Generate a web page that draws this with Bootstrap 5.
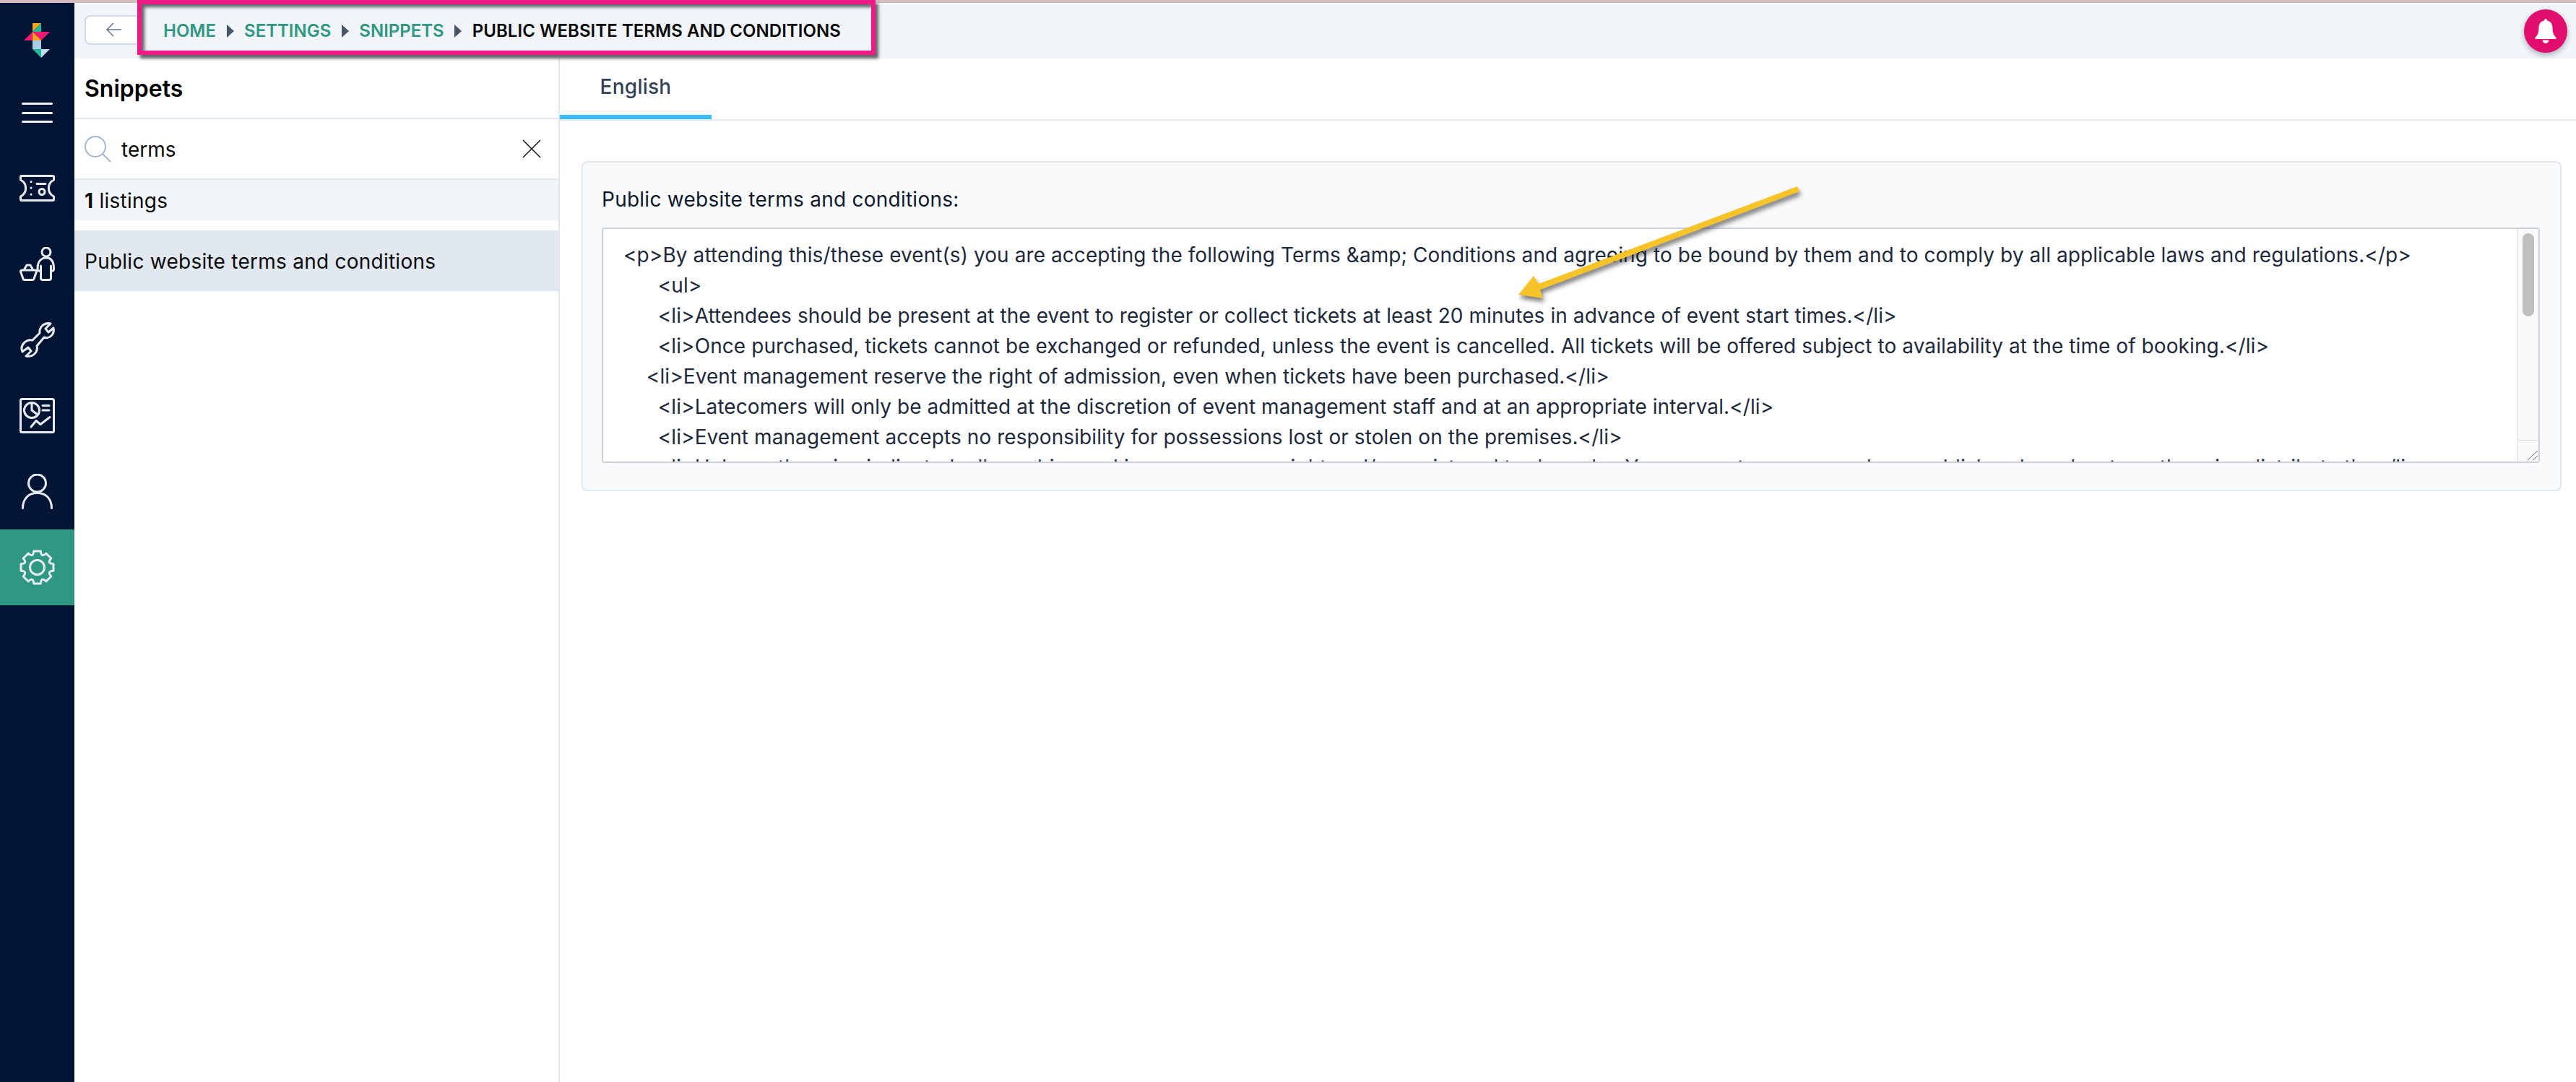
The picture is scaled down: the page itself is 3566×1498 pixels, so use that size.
<!DOCTYPE html>
<html lang="en">

<head>
    <meta charset="UTF-8">
    <title>Snippets</title>
    <link href="https://cdn.jsdelivr.net/npm/bootstrap@5.3.3/dist/css/bootstrap.min.css" rel="stylesheet">
    <style>
        body { font-family: Inter, "Liberation Sans", sans-serif; font-size: 28px; letter-spacing: .25px; color: #0a0a0a; background: #fff; overflow: hidden; }
        .shrinkable { min-width: 0; min-height: 0; }
        .top-line { height: 4px; background: #d4bcc1; flex: none; }
        .side { width: 103px; background: #021433; flex: none; }
        .logo { height: 78px; margin-top: 28px; }
        .burger { height: 98px; padding-top: 32px; }
        .burger span { display: block; width: 43px; height: 3px; background: #eef2f7; margin: 0 auto 9.5px; border-radius: 2px; }
        .side-link { height: 105px; color: #e6ebf2; }
        .side-link.active { background: #2f9883; }
        .side-link svg { fill: none; stroke: currentColor; stroke-width: 3; stroke-linecap: round; stroke-linejoin: round; }

        .top-bar { height: 77px; background: #f1f4f9; padding-left: 14px; padding-right: 12px; flex: none; }
        .back-btn { width: 79px; height: 41px; margin-bottom: 3px; background: #fff; border: 2px solid #cfdbe8; border-radius: 8px; padding: 0 0 0 28px; }
        .crumbs { margin: 0 0 0 30px; font-size: 24px; font-weight: 600; letter-spacing: 0; }
        .crumbs a { color: #2f9883; text-decoration: none; }
        .crumbs .breadcrumb-item { padding: 0; display: flex; align-items: center; }
        .crumbs .breadcrumb-item + .breadcrumb-item::before { content: ""; float: none; padding: 0; width: 0; height: 0; margin: 0 14.5px; border-left: 10px solid #475569; border-top: 9px solid transparent; border-bottom: 9px solid transparent; }
        .crumbs .breadcrumb-item.active { color: #0a0a0a; letter-spacing: .05px; }
        .bell { width: 60px; height: 60px; background: #e20e6e; box-shadow: 0 3px 7px rgba(30, 40, 60, .35); }

        .list-col { width: 672px; flex: none; border-right: 2px solid #e2e8f0; }
        .list-title { height: 84px; padding: 2px 0 0 14px; border-bottom: 2px solid #e2e8f0; font-size: 32px; font-weight: 600; letter-spacing: 0; color: #000; }
        .search-row { height: 84px; padding: 0 24px 0 14px; border-bottom: 2px solid #e2e8f0; }
        .search-row input { border: 0; padding: 2px 0 0 0; margin-left: 14px; font-size: 28px; color: #0a0a0a; background: transparent; box-shadow: none; }
        .listing-count { height: 56px; padding: 1px 0 0 14px; background: #f1f4f9; }
        .list-group-item.snippet { height: 84px; margin-top: 14px; padding: 1px 0 0 14px; background: #e2e8f0; border: 0; border-radius: 0; color: #0a0a0a; }

        .tabs { height: 86px; border-bottom: 2px solid #e2e8f0; flex: none; }
        .tabs .nav-link { height: 84px; width: 210px; padding: 0; border: 0; border-bottom: 6px solid #38bdf8; border-radius: 0; background: transparent; color: #334155; font-weight: 500; margin: 0; }
        .panel { margin: 56px 20px 0 30px; background: #f8fafc; border: 2px solid #e2e8f0; border-radius: 8px; padding: 30px 28px 37px 26px; }
        .panel label { line-height: 42px; margin-bottom: 18px; color: #0f172a; display: block; }
        .panel textarea { height: 326px; padding: 15px 40px 0 28px; line-height: 42px; font-size: 28px; letter-spacing: .08px; color: #1e293b; border: 2px solid #cbd0dc; border-radius: 4px; box-shadow: none; resize: none; }

        /* barra de scroll dibujada sobre el textarea */
        .fake-scroll { position: absolute; top: 2px; right: 2px; bottom: 2px; width: 30px; background: #fafafa; border-left: 2px solid #e8e8e8; }
        .fake-scroll .thumb { position: absolute; left: 6px; top: 6px; width: 16px; height: 115px; background: #bfbfbf; border-radius: 8px; }
        .fake-scroll .corner { position: absolute; left: 0; right: 0; bottom: 0; height: 30px; border-top: 1px solid #dcdcdc; }

        .callout { position: absolute; left: 190px; top: 0; width: 1022px; height: 76px; border: 6px solid #ef1a85; box-shadow: 4px 5px 4px rgba(40, 40, 40, .7), inset 4px 4px 4px rgba(40, 40, 40, .7); pointer-events: none; }
        .arrow { position: absolute; left: 2090px; top: 250px; filter: drop-shadow(2px 5px 3px rgba(30, 30, 30, .6)); }
    </style>
</head>

<body class="d-flex flex-column vh-100">

    <div class="top-line"></div>

    <div class="d-flex flex-grow-1 shrinkable">
        <!-- menu lateral -->
        <nav class="side d-flex flex-column">
            <div class="logo d-flex justify-content-center">
                <svg width="37" height="48" viewBox="0 0 37 48">
                    <polygon points="12,0 24,0 12,12" fill="#f9a51a" />
                    <polygon points="24,0 24,12 12,12" fill="#1fb89a" />
                    <polygon points="0,24 12,12 36,12 24,24" fill="#ee1a73" />
                    <polygon points="12,12 24,24 12,24" fill="#f9a51a" />
                    <rect x="12" y="24" width="12" height="12" fill="#a8cce4" />
                    <polygon points="12,36 24,36 24,48" fill="#1fb89a" />
                    <polygon points="24,36 36,36 24,48" fill="#c3dbea" />
                </svg>
            </div>
            <div class="burger"><span></span><span></span><span></span></div>

            <a class="side-link d-flex align-items-center justify-content-center" href="#">
                <svg width="49" height="37" viewBox="0 0 49 37">
                    <path d="M3 1.5H46Q47.5 1.5 47.5 3V7C38 12 38 25 47.5 30V34Q47.5 35.5 46 35.5H3Q1.5 35.5 1.5 34V30C11 25 11 12 1.5 7V3Q1.5 1.5 3 1.5Z" />
                    <path d="M16 9.5v.2M16 18v.2M16 27v.2M24 12.5H36" />
                    <circle cx="31" cy="23.5" r="4" />
                </svg>
            </a>
            <a class="side-link d-flex align-items-center justify-content-center" href="#">
                <svg width="49" height="47" viewBox="0 0 49 47">
                    <circle cx="37" cy="7" r="6" />
                    <path d="M29.5 33H27Q25 33 25 30C25 20 30 15 37 15C44 15 47.5 20 47.5 30Q47.5 33 45.5 33H43.5M29.5 26V43Q29.5 45.5 32 45.5H41Q43.5 45.5 43.5 43V26" />
                    <path d="M1.5 34Q1.5 32 3.5 32H21.5Q23.5 32 23.5 34L20 44Q19.5 45.5 18 45.5H7Q5.5 45.5 5 44ZM6 32L10 25H15L19 32" />
                </svg>
            </a>
            <a class="side-link d-flex align-items-center justify-content-center" href="#">
                <svg width="49" height="49" viewBox="0 0 49 49">
                    <path d="M18 25L28 15C27 7 34 0 43 2L36 9L40 14L47 8C49 17 41 24 34 21L24 33C26 41 19 49 9 47L16 40L12 35L4 41C0 32 9 23 18 25Z" />
                </svg>
            </a>
            <a class="side-link d-flex align-items-center justify-content-center" href="#">
                <svg width="49" height="49" viewBox="0 0 49 49">
                    <rect x="1.5" y="1.5" width="46" height="46" rx="2" />
                    <circle cx="17" cy="17" r="10.5" />
                    <path d="M17 6.5V17L25 23M32 10.5H41M32 17H41M16 40L23 31.5L29 36.5L42 26.5" />
                </svg>
            </a>
            <a class="side-link d-flex align-items-center justify-content-center" href="#">
                <svg width="43" height="49" viewBox="0 0 43 49">
                    <circle cx="21.5" cy="13" r="12" />
                    <path d="M1.5 47.5C1.5 34 10 26.5 21.5 26.5C33 26.5 41.5 34 41.5 47.5" />
                </svg>
            </a>
            <a class="side-link active d-flex align-items-center justify-content-center" href="#">
                <svg width="49" height="49" viewBox="0 0 49 49">
                    <path d="M47 19.7V29.3Q37.4 29.9 43.8 37L37 43.8Q29.9 37.4 29.3 47H19.7Q19.1 37.4 12 43.8L5.2 37Q11.6 29.9 2 29.3V19.7Q11.6 19.1 5.2 12L12 5.2Q19.1 11.6 19.7 2H29.3Q29.9 11.6 37 5.2L43.8 12Q37.4 19.1 47 19.7Z" />
                    <circle cx="24.5" cy="24.5" r="10" />
                </svg>
            </a>
        </nav>

        <div class="d-flex flex-column flex-grow-1 shrinkable">
            <!-- barra superior -->
            <header class="top-bar d-flex align-items-center">
                <button class="back-btn d-flex align-items-center" type="button">
                    <svg width="22" height="20" viewBox="0 0 22 20" fill="none" stroke="#64748b" stroke-width="1.5">
                        <path d="M21 10H1M10 1L1 10L10 19" />
                    </svg>
                </button>
                <ol class="breadcrumb crumbs">
                    <li class="breadcrumb-item"><a href="#">HOME</a></li>
                    <li class="breadcrumb-item"><a href="#">SETTINGS</a></li>
                    <li class="breadcrumb-item"><a href="#">SNIPPETS</a></li>
                    <li class="breadcrumb-item active">PUBLIC WEBSITE TERMS AND CONDITIONS</li>
                </ol>
                <div class="bell rounded-circle d-flex align-items-center justify-content-center ms-auto">
                    <svg width="30" height="34" viewBox="0 0 30 34" fill="#fff">
                        <path d="M15 0C16.4 0 17 1 17 2.6C22 3.6 24.5 7.5 24.5 12.5C24.5 18 25.5 22 29.5 26C30 27 29.5 28 28.5 28H1.5C.5 28 0 27 .5 26C4.5 22 5.5 18 5.5 12.5C5.5 7.5 8 3.6 13 2.6C13 1 13.6 0 15 0ZM10.5 29.5H19.5C19 32 17.5 34 15 34C12.5 34 11 32 10.5 29.5Z" />
                    </svg>
                </div>
            </header>

            <div class="d-flex flex-grow-1 shrinkable">
                <!-- listado -->
                <aside class="list-col">
                    <div class="list-title d-flex align-items-center">Snippets</div>
                    <div class="search-row d-flex align-items-center">
                        <svg width="37" height="37" viewBox="0 0 37 37" fill="none" stroke="#a3b5cb" stroke-width="2" class="flex-shrink-0">
                            <circle cx="15" cy="15" r="14" />
                            <path d="M25 25L36 36" />
                        </svg>
                        <input class="form-control" type="text" value="terms">
                        <svg width="26" height="26" viewBox="0 0 26 26" fill="none" stroke="#111" stroke-width="1.5" class="flex-shrink-0">
                            <path d="M1 1L25 25M25 1L1 25" />
                        </svg>
                    </div>
                    <div class="listing-count d-flex align-items-center"><strong class="fw-bold">1</strong>&nbsp;listings</div>
                    <div class="list-group">
                        <a href="#" class="list-group-item snippet d-flex align-items-center">Public website terms and conditions</a>
                    </div>
                </aside>

                <!-- detalle -->
                <main class="flex-grow-1 shrinkable">
                    <ul class="nav tabs">
                        <li class="nav-item"><a class="nav-link active d-flex align-items-center justify-content-center" href="#">English</a></li>
                    </ul>
                    <div class="panel">
                        <label for="terms">Public website terms and conditions:</label>
                        <div class="position-relative">
                            <textarea id="terms" class="form-control" spellcheck="false">&lt;p&gt;By attending this/these event(s) you are accepting the following Terms &amp;amp; Conditions and agreeing to be bound by them and to comply by all applicable laws and regulations.&lt;/p&gt;
      &lt;ul&gt;
      &lt;li&gt;Attendees should be present at the event to register or collect tickets at least 20 minutes in advance of event start times.&lt;/li&gt;
      &lt;li&gt;Once purchased, tickets cannot be exchanged or refunded, unless the event is cancelled. All tickets will be offered subject to availability at the time of booking.&lt;/li&gt;
    &lt;li&gt;Event management reserve the right of admission, even when tickets have been purchased.&lt;/li&gt;
      &lt;li&gt;Latecomers will only be admitted at the discretion of event management staff and at an appropriate interval.&lt;/li&gt;
      &lt;li&gt;Event management accepts no responsibility for possessions lost or stolen on the premises.&lt;/li&gt;
      &lt;li&gt;Unless otherwise indicated, all graphics and images are copyright and/or registered trademarks. You may not copy, reproduce, publish or broadcast or otherwise distribute the&lt;/li&gt;
      &lt;/ul&gt;</textarea>
                            <div class="fake-scroll">
                                <div class="thumb"></div>
                                <div class="corner">
                                    <svg width="28" height="29" viewBox="0 0 28 29" fill="none" stroke="#666" stroke-width="1" class="d-block">
                                        <path d="M27 14L13 27M27 21L20 27" />
                                    </svg>
                                </div>
                            </div>
                        </div>
                    </div>
                </main>
            </div>
        </div>
    </div>

    <!-- anotaciones de la captura -->
    <div class="callout"></div>
    <svg class="arrow" width="420" height="180" viewBox="0 0 420 180">
        <polygon points="398,8 401,15 42,151 46,163 12,158 33,132 40,143" fill="#f6c428" />
    </svg>

    <script src="https://cdn.jsdelivr.net/npm/bootstrap@5.3.3/dist/js/bootstrap.bundle.min.js"></script>
</body>

</html>
